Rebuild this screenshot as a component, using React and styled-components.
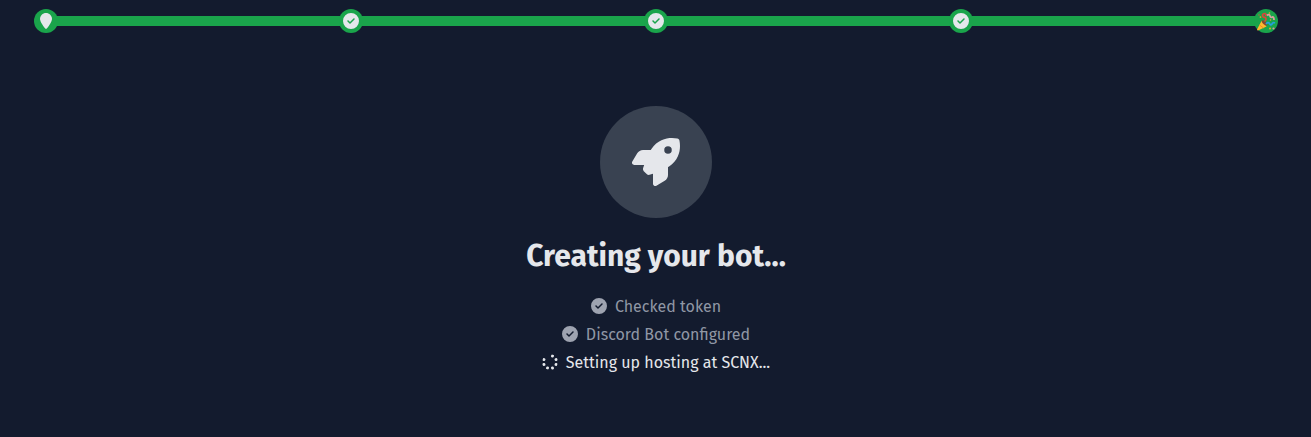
import React from "react";
import styled, { createGlobalStyle } from "styled-components";
import { FaCircleCheck, FaLocationPin, FaRocket, FaSpinner } from "react-icons/fa6";

const GlobalStyle = createGlobalStyle`
  *, *::before, *::after { box-sizing: border-box; }
  body {
    margin: 0;
    background: #131b2e;
    color: #e5e7eb;
    font-family: "Fira Sans", "Noto Sans", "Open Sans", sans-serif;
  }
`;

const Page = styled.div`
  display: flex;
  flex-direction: column;
  align-items: center;
  height: 437px;
  overflow: hidden;
`;

const Progress = styled.div`
  display: flex;
  align-items: center;
  width: 1244px;
  height: 24px;
  margin: 9px 0 0 1px;
`;

const Track = styled.div`
  flex: 1;
  height: 10px;
  margin: 0 -2px;
  background: #1aa44b;
`;

const Step = styled.div`
  display: flex;
  align-items: center;
  justify-content: center;
  flex: none;
  width: 24px;
  height: 24px;
  border-radius: 50%;
  background: #1aa44b;
  svg { display: block; }
`;

const Badge = styled.div`
  display: flex;
  align-items: center;
  justify-content: center;
  width: 112px;
  height: 112px;
  margin: 73px 0 0 1px;
  border-radius: 50%;
  background: #394251;
`;

const Title = styled.h1`
  margin: 20px 0 0 1px;
  font-size: 30px;
  line-height: 36px;
  font-weight: 700;
  white-space: nowrap;
`;

const Tasks = styled.ul`
  display: flex;
  flex-direction: column;
  align-items: center;
  gap: 4px;
  margin: 20px 0 0 1px;
  padding: 0;
  list-style: none;
`;

const Task = styled.li`
  display: flex;
  align-items: center;
  gap: 8px;
  height: 24px;
  font-size: 16px;
  line-height: 24px;
  white-space: nowrap;
  color: ${(p) => (p.$done ? "#9097a5" : "#e5e7eb")};
  svg { flex: none; color: ${(p) => (p.$done ? "#9ea3b0" : "#e5e7eb")}; }
`;

const Label = styled.span`
  padding-top: 2px;
`;

const Spinner = styled(FaSpinner)`
  transform: rotate(-67.5deg);
`;

const Popper = () => (
  <svg width="20" height="20" viewBox="0 0 40 40" aria-hidden="true">
    <path d="M11 20Q18 23 21 31L4 39Q2 39 2 37Z" fill="#ffb82e" />
    <path d="M7 28L15 34" stroke="#f08d22" strokeWidth="2" />
    <ellipse cx="17" cy="24" rx="3" ry="7" transform="rotate(-43 17 24)" fill="#85492f" />
    <path d="M17 21Q22 17 19 13Q14 13 13 9Q13 5 18 5Q22 7 19 10" fill="none" stroke="#dc4638" strokeWidth="3.2" />
    <path d="M22 9Q26 5 28 10Q29 14 33 12Q36 12 36 18" fill="none" stroke="#d8a0a0" strokeWidth="3.6" />
    <path d="M20 26Q24 21 27 25Q29 30 32 26Q34 22 38 24" fill="none" stroke="#269fdf" strokeWidth="3.6" />
    <g fill="#f4a628">
      <circle cx="9" cy="12" r="1.7" />
      <circle cx="27" cy="4" r="1.5" />
      <circle cx="29" cy="18" r="1.5" />
      <circle cx="28" cy="35" r="1.8" />
    </g>
    <circle cx="6" cy="8" r="1.3" fill="#d65345" />
    <circle cx="35" cy="35" r="2.2" fill="#d79a9f" />
  </svg>
);

const CompletedStep = () => (
  <Step><FaCircleCheck size={16} color="#e5e7eb" /></Step>
);

export default function App() {
  return (
    <>
      <GlobalStyle />
      <Page>
        <Progress>
          <Step><FaLocationPin size={16} color="#e5e7eb" /></Step>
          <Track />
          <CompletedStep />
          <Track />
          <CompletedStep />
          <Track />
          <CompletedStep />
          <Track />
          <Step><Popper /></Step>
        </Progress>
        <Badge><FaRocket size={48} /></Badge>
        <Title>Creating your bot...</Title>
        <Tasks>
          <Task $done><FaCircleCheck size={16} /><Label>Checked token</Label></Task>
          <Task $done><FaCircleCheck size={16} /><Label>Discord Bot configured</Label></Task>
          <Task><Spinner size={16} /><Label>Setting up hosting at SCNX...</Label></Task>
        </Tasks>
      </Page>
    </>
  );
}
